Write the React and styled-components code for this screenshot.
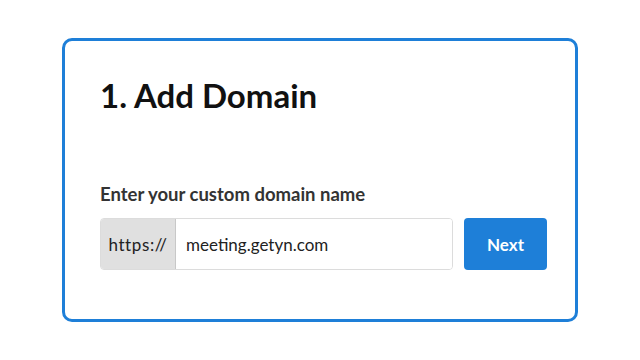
import React, { useState } from 'react';
import styled, { createGlobalStyle } from 'styled-components';

const GlobalStyle = createGlobalStyle`
  html, body {
    margin: 0;
    padding: 0;
    background: #ffffff;
    font-family: Lato, "Open Sans", "Liberation Sans", sans-serif;
  }
`;

const Page = styled.div`
  width: 640px;
  height: 360px;
  display: flex;
  align-items: center;
  justify-content: center;
`;

const Card = styled.div`
  box-sizing: border-box;
  width: 516px;
  height: 284px;
  border: 3px solid #1e7fd8;
  border-radius: 10px;
  padding: 34px 28px 0 35px;
  display: flex;
  flex-direction: column;
`;

const Title = styled.h1`
  margin: 0;
  font-size: 33px;
  line-height: 40px;
  font-weight: 700;
  color: #111;
`;

const Label = styled.label`
  margin-top: 68px;
  font-size: 18.5px;
  line-height: 22px;
  font-weight: 700;
  color: #333;
`;

const Row = styled.div`
  margin-top: 13px;
  display: flex;
  gap: 11px;
  height: 52px;
`;

const InputGroup = styled.div`
  box-sizing: border-box;
  width: 353px;
  display: flex;
  border: 1px solid #dcdcdc;
  border-radius: 4px;
  overflow: hidden;
`;

const Prefix = styled.span`
  width: 74px;
  display: flex;
  align-items: center;
  justify-content: center;
  background: #e0e0e0;
  border-right: 1px solid #c8c8c8;
  font-size: 17px;
  letter-spacing: 0.6px;
  color: #222;
`;

const Input = styled.input`
  flex: 1;
  border: none;
  outline: none;
  padding: 0 10px;
  font-family: inherit;
  font-size: 17px;
  color: #222;
  background: #fff;
`;

const Button = styled.button`
  width: 83px;
  border: none;
  border-radius: 4px;
  background: #1e7fd8;
  color: #fff;
  font-family: inherit;
  font-size: 17px;
  font-weight: 700;
  cursor: pointer;
`;

export default function App() {
  const [domain, setDomain] = useState('meeting.getyn.com');
  return (
    <Page>
      <GlobalStyle />
      <Card>
        <Title>1. Add Domain</Title>
        <Label htmlFor="domain">Enter your custom domain name</Label>
        <Row>
          <InputGroup>
            <Prefix>https://</Prefix>
            <Input id="domain" value={domain} onChange={(e) => setDomain(e.target.value)} />
          </InputGroup>
          <Button>Next</Button>
        </Row>
      </Card>
    </Page>
  );
}
